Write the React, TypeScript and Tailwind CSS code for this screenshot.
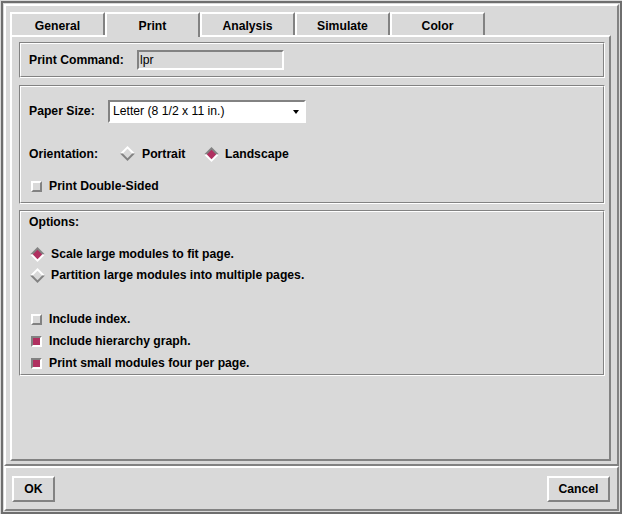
import React from "react";

const raised = "border-2 border-t-white border-l-white border-r-[#828282] border-b-[#828282]";
const sunken = "border-2 border-t-[#828282] border-l-[#828282] border-r-white border-b-white";

function Diamond({ on }: { on: boolean }) {
  const top = on ? "#828282" : "#ffffff";
  const bottom = on ? "#ffffff" : "#828282";
  const fill = on ? "#b03060" : "#d9d9d9";
  return (
    <svg width="15" height="15" viewBox="0 0 15 15" className="shrink-0">
      <polygon points="0,7.5 7.5,0 15,7.5" fill={top} />
      <polygon points="0,7.5 7.5,15 15,7.5" fill={bottom} />
      <polygon points="2.8,7.5 7.5,2.8 12.2,7.5 7.5,12.2" fill={fill} />
    </svg>
  );
}

function CheckBox({ on }: { on: boolean }) {
  return (
    <span
      className={`block w-[11px] h-[11px] shrink-0 ${
        on ? `${sunken} bg-[#b03060]` : `${raised} bg-[#d9d9d9]`
      }`}
    />
  );
}

function Groove({ className, children }: { className?: string; children: React.ReactNode }) {
  return (
    <div className={`border border-t-[#828282] border-l-[#828282] border-r-white border-b-white ${className ?? ""}`}>
      <div className="h-full border border-t-white border-l-white border-r-[#828282] border-b-[#828282]">
        {children}
      </div>
    </div>
  );
}

export default function App() {
  const tabs = ["General", "Print", "Analysis", "Simulate", "Color"];

  return (
    <div className="w-[622px] h-[514px] bg-[#d9d9d9] pl-px pt-px font-['Liberation_Sans',Arial,sans-serif] text-[12.2px] text-black">
      <div className="w-[621px] h-[513px] border-2 border-[#6e6e6e] p-px flex flex-col">
        {/* Notebook area */}
        <div className={`flex-1 ${raised} pl-1 pr-[6px] pt-[6px] pb-[3px] flex flex-col`}>
          <div className="flex items-start h-[23px]">
            {tabs.map((t) => (
              <div
                key={t}
                className={`w-[95px] flex items-center justify-center font-bold border-t-2 border-l-2 border-r-2 border-t-white border-l-white border-r-[#828282] bg-[#d9d9d9] pt-[3px] ${
                  t === "Print" ? "h-[25px] relative z-10 pb-[2px]" : "h-[23px]"
                }`}
              >
                {t}
              </div>
            ))}
          </div>

          <div className={`flex-1 ${raised} pl-[7px] pr-[4px] pt-[5px] flex flex-col`}>
            {/* Print command */}
            <Groove className="h-[36px]">
              <div className="h-full flex items-center pl-[8px]">
                <span className="w-[108px] font-bold">Print Command:</span>
                <div className={`w-[147px] h-[20px] ${sunken} pl-px flex items-center`}>lpr</div>
              </div>
            </Groove>

            {/* Paper */}
            <Groove className="h-[119px] mt-[7px]">
              <div className="flex flex-col pl-[8px] pt-[13px]">
                <div className="h-[23px] flex items-center">
                  <span className="w-[79px] font-bold">Paper Size:</span>
                  <div className={`w-[198px] h-[23px] ${sunken} bg-white pl-[3px] pr-[5px] flex items-center justify-between`}>
                    <span>Letter (8 1/2 x 11 in.)</span>
                    <svg width="6" height="4" viewBox="0 0 6 4">
                      <polygon points="0,0 6,0 3,4" fill="#000" />
                    </svg>
                  </div>
                </div>
                <div className="h-[20px] mt-[21px] flex items-center">
                  <span className="w-[91px] font-bold">Orientation:</span>
                  <div className="w-[84px] flex items-center">
                    <Diamond on={false} />
                    <span className="ml-[7px] font-bold">Portrait</span>
                  </div>
                  <Diamond on={true} />
                  <span className="ml-[6px] font-bold">Landscape</span>
                </div>
                <div className="h-[20px] mt-[12px] flex items-center pl-[2px]">
                  <CheckBox on={false} />
                  <span className="ml-[7px] font-bold">Print Double-Sided</span>
                </div>
              </div>
            </Groove>

            {/* Options */}
            <Groove className="h-[166px] mt-[6px]">
              <div className="flex flex-col pl-[8px] font-bold">
                <div className="h-[20px] flex items-center">Options:</div>
                <div className="h-[20px] mt-[12px] flex items-center pl-px">
                  <Diamond on={true} />
                  <span className="ml-[6px]">Scale large modules to fit page.</span>
                </div>
                <div className="h-[20px] mt-px flex items-center pl-px">
                  <Diamond on={false} />
                  <span className="ml-[6px]">Partition large modules into multiple pages.</span>
                </div>
                <div className="h-[20px] mt-[24px] flex items-center pl-[2px]">
                  <CheckBox on={false} />
                  <span className="ml-[7px]">Include index.</span>
                </div>
                <div className="h-[20px] mt-[2px] flex items-center pl-[2px]">
                  <CheckBox on={true} />
                  <span className="ml-[7px]">Include hierarchy graph.</span>
                </div>
                <div className="h-[20px] mt-[2px] flex items-center pl-[2px]">
                  <CheckBox on={true} />
                  <span className="ml-[7px]">Print small modules four per page.</span>
                </div>
              </div>
            </Groove>
          </div>
        </div>

        {/* Button bar */}
        <div className={`h-[45px] ${raised} flex justify-between items-start pl-[6px] pr-[7px] pt-[8px]`}>
          <button className={`w-[43px] h-[26px] ${raised} font-bold flex items-center justify-center`}>OK</button>
          <button className={`w-[63px] h-[26px] ${raised} font-bold flex items-center justify-center`}>Cancel</button>
        </div>
      </div>
    </div>
  );
}
